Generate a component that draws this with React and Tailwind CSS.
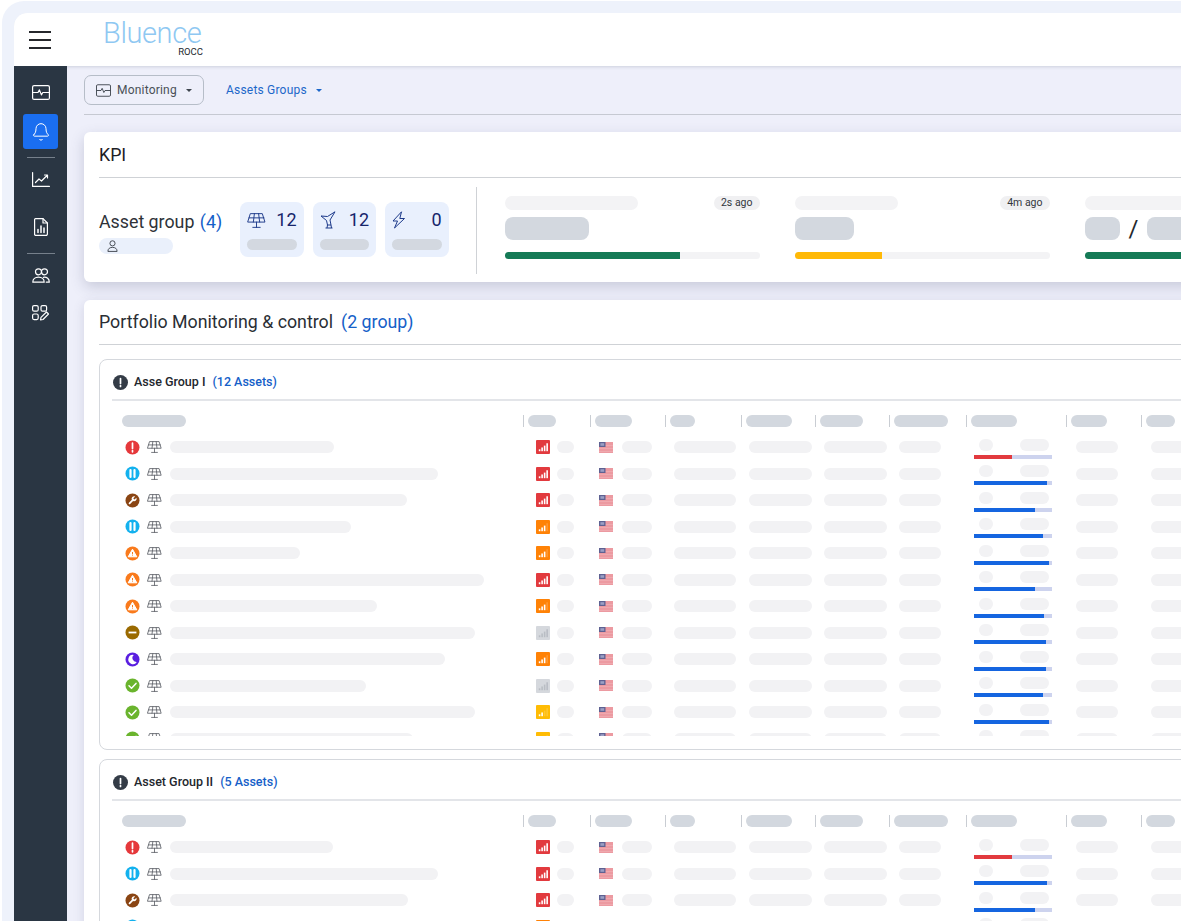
import { Bell } from "lucide-react";

const font = { fontFamily: "Roboto, 'Liberation Sans', sans-serif" };

const ICON = "w-[15px] h-[15px] shrink-0";

function StatusIcon({ type }) {
    const bg = {
        alert: "#e5383b",
        pause: "#13b1ee",
        wrench: "#8a4513",
        warn: "#f97a1c",
        minus: "#9a6a00",
        moon: "#5a1fe0",
        ok: "#6ab42d",
    }[type];
    return (
        <svg viewBox="0 0 15 15" className={ICON}>
            <circle cx="7.5" cy="7.5" r="7" fill={bg} />
            {type === "alert" && <path d="M7.5 3.2v5.2M7.5 10.6v1.2" stroke="#fff" strokeWidth="1.7" strokeLinecap="round" />}
            {type === "pause" && <path d="M5.5 4v7M9.5 4v7" stroke="#fff" strokeWidth="2.2" strokeLinecap="round" />}
            {type === "wrench" && (
                <path
                    transform="translate(2.4 2.4) scale(.42)"
                    fill="#fff"
                    d="M14.7 6.3a1 1 0 0 0 0 1.4l1.6 1.6a1 1 0 0 0 1.4 0l3.77-3.77a6 6 0 0 1-7.94 7.94l-6.91 6.91a2.12 2.12 0 0 1-3-3l6.91-6.91a6 6 0 0 1 7.94-7.94l-3.76 3.76z"
                />
            )}
            {type === "warn" && (
                <>
                    <path d="M7.5 3.2l4.3 7.6H3.2z" fill="#fff" stroke="#fff" strokeLinejoin="round" />
                    <path d="M7.5 6v2.4M7.5 9.3v.6" stroke={bg} strokeWidth="1" />
                </>
            )}
            {type === "minus" && <path d="M3.6 7.5h7.8" stroke="#fff" strokeWidth="1.8" />}
            {type === "moon" && <path d="M8.8 3a4.6 4.6 0 1 0 3 7A4 4 0 0 1 8.8 3z" fill="#fff" />}
            {type === "ok" && <path d="M4 7.8l2.5 2.4L11 5.4" stroke="#fff" strokeWidth="1.5" fill="none" strokeLinecap="round" strokeLinejoin="round" />}
        </svg>
    );
}

function SolarIcon({ className, stroke = "#5b5f66", width = 1 }) {
    return (
        <svg viewBox="0 0 18 16" fill="none" stroke={stroke} strokeWidth={width} strokeLinejoin="round" strokeLinecap="round" className={className}>
            <path d="M3.5 1.5h11l2.5 8H1z" />
            <path d="M1.9 5.5h14.2M7 1.5l-1 8M11 1.5l1 8M9 9.5v5M5.5 14.5h7" />
        </svg>
    );
}

function SignalIcon({ color, level, faded }) {
    const bars = [
        { x: 3, h: 2 },
        { x: 5.7, h: 4 },
        { x: 8.4, h: 6 },
        { x: 11.1, h: 8.5 },
    ];
    return (
        <svg viewBox="0 0 15 15" className="w-[14px] h-[14px] shrink-0">
            <rect x="0" y="0" width="15" height="15" rx="1" fill={color} />
            {bars.map((bar, i) => (
                <rect
                    key={i}
                    x={bar.x}
                    y={12 - bar.h}
                    width="1.7"
                    height={bar.h}
                    fill={faded ? "#b9bdc4" : "#fff"}
                    opacity={i < level ? 1 : 0.18}
                />
            ))}
        </svg>
    );
}

function FlagIcon() {
    return (
        <svg viewBox="0 0 14 11" className="w-[14px] h-[11px] shrink-0">
            <rect width="14" height="11" fill="#ec9aa1" />
            <path d="M0 3.5h14M0 6.5h14M0 9.5h14" stroke="#f2b4b8" strokeWidth=".6" />
            <rect width="6.5" height="5" fill="#5e6192" />
            <rect x="1.4" y="1.2" width="3.8" height="2.6" fill="#9b9fc4" />
        </svg>
    );
}

const Skel = ({ className }) => <div className={`h-[12px] rounded-full bg-[#f2f2f4] ${className}`} />;
const HeadSkel = ({ className }) => <div className={`h-[12px] rounded-full bg-[#d3d8df] ${className}`} />;

const GRID = "grid grid-cols-[410px_67px_75px_76px_74px_74px_77px_100px_75px_75px] ml-px";

const headWidths = ["w-[28px]", "w-[37px]", "w-[25px]", "w-[46px]", "w-[43px]", "w-[54px]", "w-[46px]", "w-[36px]", "w-[29px]"];

const RED = "#e23a3e";
const ORANGE = "#ff8206";
const GRAY = "#d5d8dd";
const YELLOW = "#ffbc05";

const groupOneRows = [
    { status: "alert", name: 164, signal: RED, level: 4, pct: 49, barColor: "bg-[#e23a3e]" },
    { status: "pause", name: 268, signal: RED, level: 4, pct: 93 },
    { status: "wrench", name: 237, signal: RED, level: 4, pct: 78 },
    { status: "pause", name: 181, signal: ORANGE, level: 3, pct: 88 },
    { status: "warn", name: 130, signal: ORANGE, level: 3, pct: 96 },
    { status: "warn", name: 314, signal: RED, level: 4, pct: 78 },
    { status: "warn", name: 207, signal: ORANGE, level: 3, pct: 90 },
    { status: "minus", name: 305, signal: GRAY, level: 4, pct: 92, faded: true },
    { status: "moon", name: 275, signal: ORANGE, level: 3, pct: 92 },
    { status: "ok", name: 196, signal: GRAY, level: 4, pct: 88, faded: true },
    { status: "ok", name: 305, signal: YELLOW, level: 2, pct: 96 },
    { status: "ok", name: 243, signal: YELLOW, level: 2, pct: 90 },
];

const groupTwoRows = [
    { status: "alert", name: 163, signal: RED, level: 4, pct: 49, barColor: "bg-[#e23a3e]" },
    { status: "pause", name: 268, signal: RED, level: 4, pct: 93 },
    { status: "wrench", name: 238, signal: RED, level: 4, pct: 78 },
    { status: "pause", name: 181, signal: ORANGE, level: 3, pct: 88 },
    { status: "warn", name: 130, signal: ORANGE, level: 3, pct: 96 },
];

function AssetRow({ row }) {
    return (
        <div className={`${GRID} h-[26.5px] items-center`}>
            <div className="flex items-center pl-[12px]">
                <StatusIcon type={row.status} />
                <SolarIcon className="w-[15px] h-[14px] ml-[7px] mr-[8px] shrink-0" />
                <div className="h-[12px] rounded-full bg-[#f2f2f4]" style={{ width: row.name }} />
            </div>
            <div className="flex items-center pl-[13px] gap-[7px]">
                <SignalIcon color={row.signal} level={row.level} faded={row.faded} />
                <Skel className="w-[17px]" />
            </div>
            <div className="flex items-center pl-[9px] gap-[9px]">
                <FlagIcon />
                <Skel className="w-[30px]" />
            </div>
            <div className="pl-[9px]"><Skel className="w-[62px]" /></div>
            <div className="pl-[8px]"><Skel className="w-[63px]" /></div>
            <div className="pl-[9px]"><Skel className="w-[63px]" /></div>
            <div className="pl-[10px]"><Skel className="w-[42px]" /></div>
            <div className="pl-[8px] h-full flex flex-col justify-end pb-[2px] gap-[4px]">
                <div className="w-[78px] flex justify-between pl-[5px] pr-[3px]">
                    <Skel className="w-[14px]" />
                    <Skel className="w-[29px]" />
                </div>
                <div className="w-[78px] h-[4px] bg-[#cdd3ee]">
                    <div className={`h-full ${row.barColor || "bg-[#1565e0]"}`} style={{ width: `${row.pct}%` }} />
                </div>
            </div>
            <div className="pl-[10px]"><Skel className="w-[42px]" /></div>
            <div className="pl-[10px]"><Skel className="w-[42px]" /></div>
        </div>
    );
}

function AssetGroup({ title, count, rows, clip }) {
    return (
        <div className="border border-[#d5d8dd] rounded-lg bg-white px-[12px]">
            <div className="h-[41px] pt-[6px] flex items-center border-b-2 border-[#e3e5e9]">
                <svg viewBox="0 0 15 15" className="w-[15px] h-[15px] ml-px">
                    <circle cx="7.5" cy="7.5" r="7.5" fill="#343c47" />
                    <path d="M7.5 3.5v5M7.5 10.5v1" stroke="#fff" strokeWidth="1.7" strokeLinecap="round" />
                </svg>
                <span className="ml-[6px] text-[12.5px] font-medium text-[#23272d]">{title}</span>
                <span className="ml-[7px] text-[12.5px] font-medium text-[#1560c8]">{count}</span>
            </div>
            <div className={`${GRID} pt-[14px] pb-[7px]`}>
                <div className="pl-[9px]"><HeadSkel className="w-[64px]" /></div>
                {headWidths.map((w, i) => (
                    <div key={i} className="border-l border-[#c9cdd3] pl-[4px]">
                        <HeadSkel className={w} />
                    </div>
                ))}
            </div>
            <div className={clip ? "h-[302px] overflow-hidden mb-[13px]" : ""}>
                {rows.map((row, i) => <AssetRow key={i} row={row} />)}
            </div>
        </div>
    );
}

function KpiItem({ time, fill, pct, children, titleWidth }) {
    return (
        <div className="w-[255px] mb-[5px] shrink-0">
            <div className="flex justify-between items-center h-[14px]">
                <div className={`h-[14px] rounded-full bg-[#f3f3f5] ${titleWidth}`} />
                {time && <span className="h-[14px] px-[7px] rounded-full bg-[#f0f0f2] text-[10.5px] leading-[14px] text-[#33373d]">{time}</span>}
            </div>
            <div className="h-[23px] mt-[7px] flex items-center">{children}</div>
            <div className="h-[7px] mt-[12px] rounded-full bg-[#f3f3f5] overflow-hidden">
                <div className={`h-full ${fill}`} style={{ width: `${pct}%` }} />
            </div>
        </div>
    );
}

const BigSkel = ({ className }) => <div className={`h-[23px] rounded-lg bg-[#d3d8df] ${className}`} />;

function Tile({ icon, value }) {
    return (
        <div className="w-[63.5px] h-[55px] rounded-lg bg-[#e9f0fd] px-[7px] pt-[8px]">
            <div className="flex items-center justify-between h-[20px]">
                {icon}
                <span className="text-[18px] leading-none font-normal text-[#16256b]">{value}</span>
            </div>
            <div className="h-[11px] mt-[9px] rounded-full bg-[#d3d8e0]" />
        </div>
    );
}

const navIcon = { fill: "none", stroke: "#fff", strokeWidth: 1.2, strokeLinecap: "round", strokeLinejoin: "round" };

function SideNav() {
    return (
        <div className="w-[53px] shrink-0 bg-[#2a3643] flex flex-col items-center">
            <div className="h-[48px] pt-[4px] w-full flex items-center justify-center">
                <svg viewBox="0 0 18 15" {...navIcon} className="w-[18px] h-[15px]">
                    <rect x=".6" y=".6" width="16.8" height="13.8" rx="1.5" />
                    <path d="M.6 7.5h5.4l1.4-2.6 2 5 1.4-2.4h6.6" />
                </svg>
            </div>
            <div className="w-[35px] h-[35px] rounded-[3px] bg-[#1a6ef0] flex items-center justify-center">
                <Bell size={20} color="#fff" strokeWidth={1.2} />
            </div>
            <div className="w-[28px] h-px bg-[#76808b] mt-[8px]" />
            <div className="h-[42px] flex items-center justify-center">
                <svg viewBox="0 0 18 15" {...navIcon} className="w-[18px] h-[15px]">
                    <path d="M.6.6v13.8h16.8" />
                    <path d="M3.5 10.5l3.5-3.5 2.5 2 5.5-5.5M12.5 3h3v3" />
                </svg>
            </div>
            <div className="h-[53px] flex items-center justify-center">
                <svg viewBox="0 0 14 18" {...navIcon} className="w-[14px] h-[18px]">
                    <path d="M1.5.6h7.5l4.4 4.4v10.9a1.5 1.5 0 0 1-1.5 1.5H1.5A1.2 1.2 0 0 1 .6 16V1.5A1 1 0 0 1 1.5.6z" />
                    <path d="M9 .6V5h4.4" />
                    <path d="M4 14.5v-3M7 14.5V8M10 14.5v-4.5" strokeWidth="1.5" />
                </svg>
            </div>
            <div className="w-[28px] h-px bg-[#76808b]" />
            <div className="h-[42px] flex items-center justify-center">
                <svg viewBox="0 0 18 15" {...navIcon} className="w-[18px] h-[15px]">
                    <circle cx="6.5" cy="3.8" r="3" />
                    <circle cx="12.5" cy="3.8" r="3" />
                    <path d="M.8 14.2c0-3 2.4-5 5.7-5s5.7 2 5.7 5zM11.5 9.3c3.4-.5 5.8 1.6 5.8 4.9h-3" />
                </svg>
            </div>
            <div className="h-[34px] flex items-center justify-center">
                <svg viewBox="0 0 17 16" {...navIcon} className="w-[17px] h-[16px]">
                    <rect x=".6" y=".6" width="5.6" height="5.6" rx="1.5" />
                    <rect x="9" y=".6" width="5.6" height="5.6" rx="1.5" />
                    <rect x=".6" y="9" width="5.6" height="5.6" rx="1.5" />
                    <path d="M8.5 15l.5-2.6 5.5-5.4 2 2-5.5 5.5z" />
                </svg>
            </div>
        </div>
    );
}

export default function App() {
    return (
        <div className="h-[921px] w-full overflow-hidden bg-white" style={font}>
            <div className="w-[1400px] ml-[2px] mt-px h-[1000px] rounded-tl-[22px] bg-[#eef2fb] pl-[12px] pt-[12px]">
                <div className="h-full rounded-tl-[14px] overflow-hidden flex flex-col bg-white">
                    {/* top bar */}
                    <div className="h-[53px] shrink-0 bg-white flex items-center shadow-[0_1px_3px_rgba(60,70,90,0.18)] relative">
                        <div className="w-[22px] ml-[15px] flex flex-col gap-[6px]">
                            <div className="h-[2px] bg-[#26282c]" />
                            <div className="h-[2px] bg-[#26282c]" />
                            <div className="h-[2px] bg-[#26282c]" />
                        </div>
                        <div className="ml-[52px] w-[100px] -mt-[4px]">
                            <div className="text-[29px] leading-[28px] font-light tracking-[-0.4px] text-[#8fc8f2]">Bluence</div>
                            <div className="text-[9.5px] leading-[10px] text-right text-[#23272d]">ROCC</div>
                        </div>
                    </div>

                    <div className="flex flex-1">
                        <SideNav />
                        <div className="flex-1 bg-[#eeeffa] pl-[17px]">
                            {/* filter row */}
                            <div className="h-[49px] flex items-center border-b border-[#c6c9d2]">
                                <button className="h-[30px] w-[120px] flex items-center pl-[11px] border border-[#b6bdc8] rounded-[7px] text-[12px] text-[#495057]">
                                    <svg viewBox="0 0 18 15" fill="none" stroke="#3d444d" strokeWidth="1.1" strokeLinejoin="round" className="w-[15px] h-[13px]">
                                        <rect x=".6" y=".6" width="16.8" height="13.8" rx="1.5" />
                                        <path d="M.6 7.5h5.4l1.4-2.6 2 5 1.4-2.4h6.6" />
                                    </svg>
                                    <span className="ml-[6px] tracking-[0.2px]">Monitoring</span>
                                    <span className="ml-[9px] w-0 h-0 border-x-[3px] border-x-transparent border-t-[3px] border-t-[#3d444d]" />
                                </button>
                                <span className="ml-[22px] text-[12px] tracking-[0.2px] text-[#1c67c9]">Assets Groups</span>
                                <span className="ml-[9px] w-0 h-0 border-x-[3px] border-x-transparent border-t-[3px] border-t-[#1c67c9]" />
                            </div>

                            {/* KPI */}
                            <div className="mt-[17px] h-[150px] bg-white rounded-md px-[15px] shadow-[0_5px_14px_rgba(70,75,110,0.22)]">
                                <div className="h-[46px] pt-[2px] flex items-center border-b border-[#cfd2d6] text-[17.8px] text-[#1d2024]">KPI</div>
                                <div className="h-[104px] flex items-center">
                                    <div className="w-[141px] shrink-0">
                                        <div className="mt-[6px] text-[17.8px] leading-[20px] text-[#2e3238]">
                                            Asset group <span className="text-[#1560c8] ml-[1px]">(4)</span>
                                        </div>
                                        <div className="w-[74px] h-[16px] mt-[6px] rounded-full bg-[#eaf0fb] pl-[8px] flex items-center">
                                            <svg viewBox="0 0 12 13" fill="none" stroke="#3a4048" strokeWidth="1" className="w-[11px] h-[12px]">
                                                <circle cx="6" cy="3.6" r="2.8" />
                                                <path d="M1 12.4c0-3 2-4.4 5-4.4s5 1.4 5 4.4z" />
                                            </svg>
                                        </div>
                                    </div>
                                    <div className="flex gap-[9px] -mt-px">
                                        <Tile value="12" icon={<SolarIcon className="w-[19px] h-[17px]" stroke="#1d3a8a" width={0.9} />} />
                                        <Tile
                                            value="12"
                                            icon={
                                                <svg viewBox="0 0 16 18" fill="none" stroke="#1d3a8a" strokeWidth="1" strokeLinejoin="round" className="w-[16px] h-[18px]">
                                                    <path d="M15 .8L7.5 5.5 1 5l5.5 4.5L7.5 14H11l-1-5z" />
                                                    <path d="M5.5 17h7M7.5 14l-.5 3M11 14l.5 3" />
                                                </svg>
                                            }
                                        />
                                        <Tile
                                            value="0"
                                            icon={
                                                <svg viewBox="0 0 14 18" fill="none" stroke="#1d3a8a" strokeWidth="1" strokeLinejoin="round" className="w-[14px] h-[18px]">
                                                    <path d="M9.5.8L1 10h4.5L2.5 17l10-9.5H7.8z" />
                                                </svg>
                                            }
                                        />
                                    </div>
                                    <div className="w-px h-[87px] bg-[#cfd2d6] ml-[27px] mr-[28px] shrink-0" />
                                    <div className="flex gap-[35px]">
                                        <KpiItem time="2s ago" fill="bg-[#157a56]" pct={69} titleWidth="w-[133px]">
                                            <BigSkel className="w-[84px]" />
                                        </KpiItem>
                                        <KpiItem time="4m ago" fill="bg-[#ffb907]" pct={34.5} titleWidth="w-[103px]">
                                            <BigSkel className="w-[59px]" />
                                        </KpiItem>
                                        <KpiItem fill="bg-[#157a56]" pct={60} titleWidth="w-[133px]">
                                            <BigSkel className="w-[35px]" />
                                            <span className="mx-[9px] text-[24px] leading-none text-[#23272d]">/</span>
                                            <BigSkel className="w-[50px]" />
                                        </KpiItem>
                                    </div>
                                </div>
                            </div>

                            {/* portfolio */}
                            <div className="mt-[18px] bg-white rounded-md px-[15px] pb-[20px] shadow-[0_3px_12px_rgba(70,75,110,0.16)]">
                                <div className="h-[45px] pt-px flex items-center border-b border-[#cfd2d6] text-[17.8px] text-[#2a2e34]">
                                    Portfolio Monitoring &amp; control
                                    <span className="ml-[8px] text-[#1560c8]">(2 group)</span>
                                </div>
                                <div className="mt-[14px] flex flex-col gap-[9px]">
                                    <AssetGroup title="Asse Group I" count="(12 Assets)" rows={groupOneRows} clip />
                                    <AssetGroup title="Asset Group II" count="(5 Assets)" rows={groupTwoRows} />
                                </div>
                            </div>
                        </div>
                    </div>
                </div>
            </div>
        </div>
    );
}
